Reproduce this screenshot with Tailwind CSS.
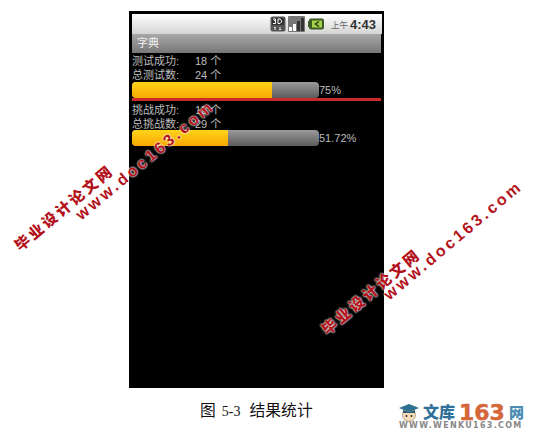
<!DOCTYPE html>
<html lang="zh">
<head>
<meta charset="UTF-8">
<title>结果统计</title>
<script src="https://cdn.jsdelivr.net/npm/@tailwindcss/browser@4"></script>
</head>
<body class="bg-white font-['Liberation_Sans','Noto_Sans_CJK_SC',sans-serif]">
<div class="relative w-[536px] h-[435px] overflow-hidden pt-[11px]">

  <!-- phone screen -->
  <div class="ml-[129px] w-[255px] h-[377px] bg-black pt-[3px] pl-[3px] pr-[3px]">
    <!-- status bar -->
    <div class="h-[20px] w-[250px] bg-gradient-to-b from-[#ffffff] to-[#d4d4d4] flex items-center justify-end pr-[6px]">
      <svg width="16" height="16" viewBox="0 0 16 16" class="mr-[2px]">
        <rect x="0.5" y="0.5" width="15" height="15" rx="2" fill="#555"/>
        <rect x="2" y="2" width="12" height="7" fill="#333"/>
        <path d="M3 3h2.5v1.5H4M5.5 4.5v3H3M8 3v4.5h2l1.5-1.5V4.500L10 3z" fill="none" stroke="#fff" stroke-width="1"/>
        <path d="M5 14v-3M4 12l1-1 1 1M10 11v3M9 13l1 1 1-1" fill="none" stroke="#ddd" stroke-width="1"/>
      </svg>
      <svg width="17" height="16" viewBox="0 0 17 16" class="mr-[3px]">
        <rect width="17" height="16" rx="1" fill="#777"/>
        <rect x="1" y="11" width="3" height="4" fill="#fff"/>
        <rect x="5" y="8" width="3" height="7" fill="#fff"/>
        <rect x="9" y="5" width="3" height="10" fill="#333"/>
        <rect x="13" y="2" width="3" height="13" fill="#333"/>
      </svg>
      <svg width="16" height="12" viewBox="0 0 16 12" class="mr-[7px]">
        <rect x="1" y="0.500" width="15" height="11" rx="2" fill="#3d5a24"/>
        <rect x="0" y="3" width="2" height="6" fill="#3d5a24"/>
        <rect x="4" y="2.500" width="10" height="7" fill="#a6cf4a"/>
        <path d="M11 3.500 7.500 6 11 8.500" fill="none" stroke="#263a14" stroke-width="1.500"/>
      </svg>
      <span class="text-[8.500px] text-[#666] mr-[2px] leading-none mt-[2px]">上午</span>
      <span class="text-[13px] font-bold text-[#333] leading-none">4:43</span>
    </div>

    <!-- title bar -->
    <div class="h-[19px] w-[249px] bg-gradient-to-b from-[#a8a8a8] to-[#777777] text-[#f2f2f2] text-[11px] leading-[19px] pl-[5px]">字典</div>

    <!-- first stats -->
    <div class="h-[29px] pt-[1px] text-[#bdbdbd] text-[11px] leading-[14px]">
      <div class="flex"><span class="w-[63px]">测试成功:</span><span>18 个</span></div>
      <div class="flex"><span class="w-[63px]">总测试数:</span><span>24 个</span></div>
    </div>
    <div class="flex items-center h-[16px]">
      <div class="w-[187px] h-[16px] rounded-[4px] bg-gradient-to-b from-[#9a9a9a] to-[#5c5c5c] overflow-hidden">
        <div class="w-[140px] h-full bg-gradient-to-b from-[#ffd31a] to-[#f8a800]"></div>
      </div>
      <span class="text-[#bdbdbd] text-[11px]">75%</span>
    </div>
    <div class="h-[3px] w-[249px] bg-[#c92a2a]"></div>

    <!-- second stats -->
    <div class="h-[28px] pt-[1px] mt-[1px] text-[#bdbdbd] text-[11px] leading-[14px]">
      <div class="flex"><span class="w-[63px]">挑战成功:</span><span>15 个</span></div>
      <div class="flex"><span class="w-[63px]">总挑战数:</span><span>29 个</span></div>
    </div>
    <div class="flex items-center h-[16px]">
      <div class="w-[187px] h-[16px] rounded-[4px] bg-gradient-to-b from-[#9a9a9a] to-[#5c5c5c] overflow-hidden">
        <div class="w-[96px] h-full bg-gradient-to-b from-[#ffd31a] to-[#f8a800]"></div>
      </div>
      <span class="text-[#bdbdbd] text-[11px]">51.72%</span>
    </div>
  </div>

  <!-- caption + logo -->
  <div class="flex items-start mt-[15px]">
    <div class="ml-[200px] w-[199px] text-[15.800px] leading-[16px] text-[#111] font-['Liberation_Serif','Noto_Sans_CJK_SC',serif] whitespace-nowrap">图<span class="text-[14px] ml-[6px] mr-[9px]">5-3</span>结果统计</div>
    <div class="w-[125px]">
      <div class="flex items-center h-[19px] leading-none whitespace-nowrap font-black">
        <svg width="20" height="19" viewBox="0 0 20 19" class="mr-[4px] shrink-0">
          <circle cx="10" cy="12" r="6.500" fill="#f6dcb8" stroke="#8a7a66" stroke-width="0.600"/>
          <circle cx="7.500" cy="13" r="1" fill="#333"/>
          <circle cx="12.500" cy="13" r="1" fill="#333"/>
          <path d="M0 5 10 1l10 4-10 4z" fill="#2f6f8f"/>
          <path d="M4 7v3h12V7l-6 2z" fill="#2a5a76"/>
        </svg>
        <span class="text-[16px] text-[#2f7198] w-[36px] shrink-0">文库</span>
        <span class="text-[22px] text-[#d4663a] w-[50px] shrink-0 font-['DejaVu_Sans',sans-serif] font-bold [-webkit-text-stroke:0.5px_#d4663a]">163</span>
        <span class="text-[15px] text-[#4c8db3]">网</span>
      </div>
      <div class="text-[8px] leading-[8px] font-bold text-[#888] tracking-[1.300px] whitespace-nowrap font-['DejaVu_Sans',sans-serif]">WWW.WENKU163.COM</div>
    </div>
  </div>

  <!-- watermarks -->
  <div class="absolute left-[17px] top-[238px] origin-left -rotate-40 text-[15px] leading-[20px] font-black text-[#b3121a] whitespace-nowrap tracking-[2.700px]">毕业设计论文网</div>
  <div class="absolute left-[78px] top-[207px] origin-left -rotate-40 text-[16px] leading-[20px] font-bold text-[#b3121a] whitespace-nowrap tracking-[3px] [text-shadow:0_0_2px_#fff,0_0_2px_#fff]">www.doc163.com</div>
  <div class="absolute left-[324px] top-[322px] origin-left -rotate-40 text-[15px] leading-[20px] font-black text-[#b3121a] whitespace-nowrap tracking-[2.700px] [text-shadow:0_0_2px_#fff,0_0_2px_#fff]">毕业设计论文网</div>
  <div class="absolute left-[386px] top-[287px] origin-left -rotate-40 text-[16px] leading-[20px] font-bold text-[#b3121a] whitespace-nowrap tracking-[3px] [text-shadow:0_0_2px_#fff,0_0_2px_#fff]">www.doc163.com</div>
</div>
</body>
</html>
